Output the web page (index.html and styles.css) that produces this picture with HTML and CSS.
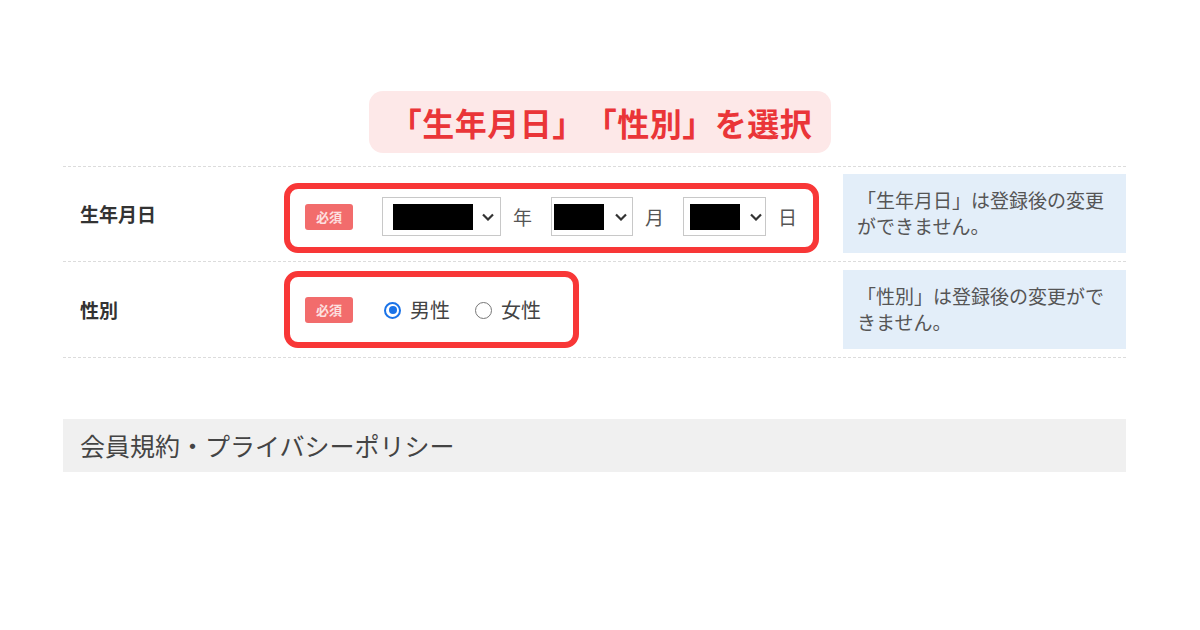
FILE: index.html
```html
<!DOCTYPE html>
<html lang="ja">
<head>
  <meta charset="UTF-8">
  <title>生年月日・性別の選択</title>
  <link rel="stylesheet" href="styles.css">
</head>
<body>

  <div class="page">

    <!-- 見出し -->
    <div class="title-wrap">
      <p class="title">「生年月日」「性別」を選択</p>
    </div>

    <div class="form">

      <!-- 生年月日 -->
      <div class="row">
        <div class="label">生年月日</div>
        <div class="field field-date">
          <span class="badge">必須</span>
          <div class="select select-year">
            <span class="redact"></span>
            <svg class="chevron" width="12" height="8" viewBox="0 0 12 8"><polyline points="1,1.5 6,6.5 11,1.5" fill="none" stroke="#333" stroke-width="2.2"/></svg>
          </div>
          <span class="unit">年</span>
          <div class="select select-month">
            <span class="redact"></span>
            <svg class="chevron" width="12" height="8" viewBox="0 0 12 8"><polyline points="1,1.5 6,6.5 11,1.5" fill="none" stroke="#333" stroke-width="2.2"/></svg>
          </div>
          <span class="unit">月</span>
          <div class="select select-day">
            <span class="redact"></span>
            <svg class="chevron" width="12" height="8" viewBox="0 0 12 8"><polyline points="1,1.5 6,6.5 11,1.5" fill="none" stroke="#333" stroke-width="2.2"/></svg>
          </div>
          <span class="unit unit-last">日</span>
        </div>
        <div class="note">「生年月日」は登録後の変更ができません。</div>
      </div>

      <!-- 性別 -->
      <div class="row">
        <div class="label">性別</div>
        <div class="field field-gender">
          <span class="badge">必須</span>
          <label class="radio-item"><span class="radio checked"></span>男性</label>
          <label class="radio-item"><span class="radio"></span>女性</label>
        </div>
        <div class="note">「性別」は登録後の変更ができません。</div>
      </div>

    </div>

    <h2 class="section">会員規約・プライバシーポリシー</h2>

  </div>

</body>
</html>
```

FILE: styles.css
```css
body {
  margin: 0;
  background: #fff;
  font-family: "Noto Sans CJK JP", "Noto Sans", sans-serif;
  color: #444;
  text-spacing-trim: space-all;
}

.page {
  width: 1063px;
  margin-left: 63px;
  padding-top: 91px;
}

.title-wrap {
  text-align: center;
  padding-left: 11px;
  margin-bottom: 13px;
}

.title {
  display: inline-block;
  margin: 0;
  padding: 0 19px 0 21px;
  background: #fde8e8;
  border-radius: 14px;
  color: #ea3538;
  font-size: 32px;
  font-weight: bold;
  line-height: 62px;
  letter-spacing: 0.5px;
}

.row {
  display: flex;
  align-items: center;
  padding: 7px 0 8px;
  border-top: 1px dashed #dcdcdc;
}

.row:last-child {
  padding-top: 8px;
  border-bottom: 1px dashed #dcdcdc;
}

.label {
  width: 221px;
  padding-left: 17px;
  box-sizing: border-box;
  font-size: 19px;
  font-weight: bold;
  color: #333;
}

.field {
  display: flex;
  align-items: center;
  border: 6px solid #f83737;
  border-radius: 14px;
  background: #fff;
}

.field-date {
  padding: 8px 16px 11px 15px;
  margin-top: 9px;
}

.field-gender {
  padding: 20px 32px 19px 15px;
}

.badge {
  display: inline-block;
  width: 48px;
  height: 26px;
  line-height: 26px;
  text-align: center;
  background: #f26c6c;
  color: #fde0e0;
  font-size: 13px;
  font-weight: bold;
  border-radius: 3px;
}

.select {
  display: flex;
  align-items: center;
  height: 39px;
  box-sizing: border-box;
  border: 1px solid #c8c8c8;
  background: #fff;
}

.redact {
  display: block;
  height: 26px;
  background: #000;
}

.chevron {
  display: block;
}

.select-year {
  width: 119px;
  margin-left: 29px;
}

.select-year .redact {
  width: 80px;
  margin: 0 9px 0 10px;
}

.select-month {
  width: 82px;
}

.select-month .redact {
  width: 50px;
  margin: 0 11px 0 2px;
}

.select-day {
  width: 83px;
}

.select-day .redact {
  width: 50px;
  margin: 0 10px 0 6px;
}

.unit {
  margin: 0 19px 0 12px;
  font-size: 19px;
  color: #555;
  line-height: 26px;
}

.unit-last {
  margin-right: 0;
}

.radio-item {
  display: flex;
  align-items: center;
  font-size: 20px;
  color: #444;
  line-height: 26px;
}

.radio-item:first-of-type {
  margin-left: 31px;
}

.radio-item + .radio-item {
  margin-left: 25px;
}

.radio {
  width: 17px;
  height: 17px;
  box-sizing: border-box;
  border: 1.5px solid #777;
  border-radius: 50%;
  margin-right: 9px;
  position: relative;
}

.radio.checked {
  border: 2px solid #1a73e8;
}

.radio.checked::after {
  content: "";
  position: absolute;
  left: 2.5px;
  top: 2.5px;
  width: 8px;
  height: 8px;
  border-radius: 50%;
  background: #1a73e8;
}

.note {
  margin-left: auto;
  width: 283px;
  box-sizing: border-box;
  padding: 13px 14px 14px;
  background: #e3eef9;
  font-size: 19px;
  line-height: 26px;
  color: #555;
}

.section {
  margin: 61px 0 0;
  height: 53px;
  line-height: 53px;
  padding-left: 17px;
  background: #f0f0f0;
  font-size: 25px;
  font-weight: normal;
  color: #444;
}
```
